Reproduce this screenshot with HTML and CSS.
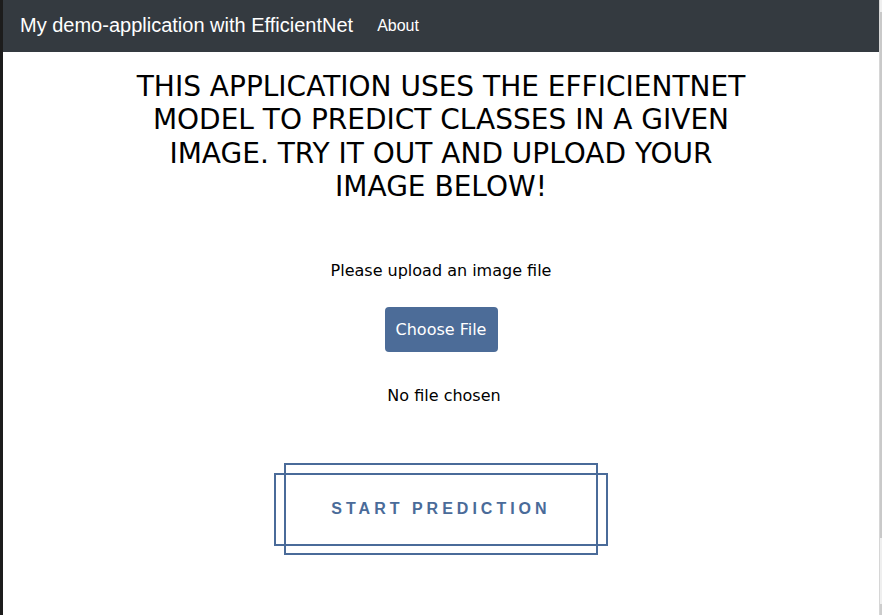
FILE: index.html
```html
<!DOCTYPE html>
<html lang="en">
<head>
<meta charset="utf-8">
<title>EfficientNet demo</title>
<link rel="stylesheet" href="styles.css">
</head>
<body>
<div class="frame">
  <div class="edge-left"></div>
  <div class="page">
    <nav class="navbar">
      <a class="brand" href="#">My demo-application with EfficientNet</a>
      <a class="nav-link" href="#">About</a>
    </nav>
    <main class="content">
      <h1 class="headline">THIS APPLICATION USES THE EFFICIENTNET MODEL TO PREDICT CLASSES IN A GIVEN IMAGE. TRY IT OUT AND UPLOAD YOUR IMAGE BELOW!</h1>
      <p class="label">Please upload an image file</p>
      <button class="choose-btn" type="button">Choose File</button>
      <p class="file-status">No file chosen</p>
      <button class="start-btn" type="button"><span>START PREDICTION</span></button>
    </main>
  </div>
  <div class="scrollbar"><div class="thumb"></div><div class="arrow"></div></div>
</div>
</body>
</html>
```
FILE: styles.css
```css
* { box-sizing: border-box; }
html, body { margin: 0; padding: 0; height: 100%; }
body { background: #fff; overflow: hidden; }
.frame { display: flex; height: 615px; }
.edge-left { width: 3px; background: #1c1c1c; flex: none; }
.page { flex: 1; display: flex; flex-direction: column; min-width: 0; }
.scrollbar { width: 3px; flex: none; background: #efefef; display: flex; flex-direction: column; border-left: 1px solid #d6d6d6; }
.thumb { margin-top: 12px; height: 526px; background: #c9c9c9; }
.arrow { margin-top: auto; height: 11px; background: #cdcdcd; }

.navbar {
  height: 52px;
  background: #343a40;
  display: flex;
  align-items: center;
  padding: 0 17px 1px;
  font-family: "Liberation Sans", Arial, sans-serif;
}
.brand { color: #fff; text-decoration: none; font-size: 20px; margin-right: 24px; }
.nav-link { color: #fff; text-decoration: none; font-size: 16px; }

.content {
  display: flex;
  flex-direction: column;
  align-items: center;
  font-family: "DejaVu Sans", sans-serif;
  color: #000;
}
.headline {
  margin: 18px 0 0;
  max-width: 640px;
  font-size: 28px;
  font-weight: normal;
  line-height: 33.4px;
  text-align: center;
}
.label { margin: 57px 0 0; font-size: 16px; line-height: 20px; }
.choose-btn {
  margin-top: 26px;
  width: 113px;
  height: 45px;
  border: none;
  border-radius: 4px;
  background: #4c6c98;
  color: #fff;
  font-family: "DejaVu Sans", sans-serif;
  font-size: 16px;
}
.file-status { margin: 34px 0 0 6px; font-size: 16px; line-height: 20px; }
.start-btn {
  position: relative;
  margin-top: 67px;
  width: 334px;
  height: 73px;
  border: 2px solid #4a6b99;
  background: transparent;
  color: #4a6b99;
  font-family: "Liberation Sans", Arial, sans-serif;
  font-weight: bold;
  font-size: 16px;
  letter-spacing: 4px;
  padding: 0;
}
.start-btn::before {
  content: "";
  position: absolute;
  top: -12px;
  bottom: -11px;
  left: 8px;
  right: 8px;
  border: 2px solid #4a6b99;
}
.start-btn span { position: relative; }
```
